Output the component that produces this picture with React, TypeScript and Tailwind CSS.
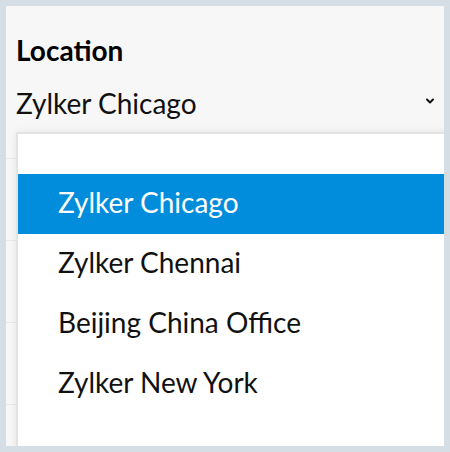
import { ChevronDown } from 'lucide-react';

const OPTIONS = ['Zylker Chicago', 'Zylker Chennai', 'Beijing China Office', 'Zylker New York'];

export default function App() {
  const selected = 'Zylker Chicago';

  return (
    <div className="w-[450px] h-[452px] bg-[#d6dee5] p-[6px] overflow-hidden" style={{ fontFamily: 'Lato, "Open Sans", sans-serif' }}>
      <div className="relative w-[438px] h-[440px] bg-[#f7f7f7] overflow-hidden">
        <div className="pl-[10px] pr-[8px] pt-[27px]">
          <div className="text-[28px] font-bold leading-[34px] text-black">Location</div>
          <div className="flex items-center justify-between mt-[19px] h-[34px]">
            <span className="text-[28px] leading-[34px] text-[#111]">{selected}</span>
            <ChevronDown size={12} strokeWidth={4} className="text-[#111] -mt-[4px]" />
          </div>
        </div>

        {/* rows underneath the open menu */}
        <div>
          <div className="h-[39px] border-b border-[#e8e8e8]" />
          {[0, 1, 2].map((i) => (
            <div key={i} className="h-[82px] border-b border-[#e8e8e8]" />
          ))}
        </div>

        <div className="absolute left-[10px] top-[126px] w-[440px] h-[330px] bg-white border-2 border-[#e3e3e3] shadow-[0_0_8px_rgba(0,0,0,0.08)]">
          <div className="pt-[40px]">
            {OPTIONS.map((o) => (
              <div
                key={o}
                className={`h-[60px] flex items-center pl-[40px] pb-[5px] text-[28px] ${
                  o === selected ? 'bg-[#018ddb] text-white' : 'text-[#111]'
                }`}
              >
                {o}
              </div>
            ))}
          </div>
        </div>
      </div>
    </div>
  );
}
